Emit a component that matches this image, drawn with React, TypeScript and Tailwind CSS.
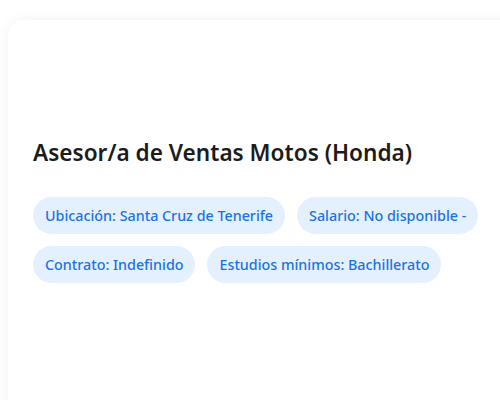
import React from "react";

const chips = [
  "Ubicación: Santa Cruz de Tenerife",
  "Salario: No disponible -",
  "Contrato: Indefinido",
  "Estudios mínimos: Bachillerato",
];

export default function App() {
  return (
    <div
      className="w-[500px] h-[400px] overflow-hidden bg-white pt-[20px] pl-[8px]"
      style={{ fontFamily: '"Noto Sans", sans-serif' }}
    >
      <div className="w-[520px] h-[420px] rounded-[16px] bg-white shadow-[0_0_14px_rgba(0,0,0,0.06)] pl-[25px] pt-[118px]">
        <h1 className="text-[22.6px] leading-[30px] font-semibold text-[#1c1c1c]">
          Asesor/a de Ventas Motos (Honda)
        </h1>
        <div className="mt-[29px] flex flex-wrap gap-[12px] w-[460px]">
          {chips.map((c) => (
            <span
              key={c}
              className="h-[37px] flex items-center px-[12px] rounded-full bg-[#e5f0ff] text-[#1a73e8] text-[14.3px] font-medium"
            >
              {c}
            </span>
          ))}
        </div>
      </div>
    </div>
  );
}
